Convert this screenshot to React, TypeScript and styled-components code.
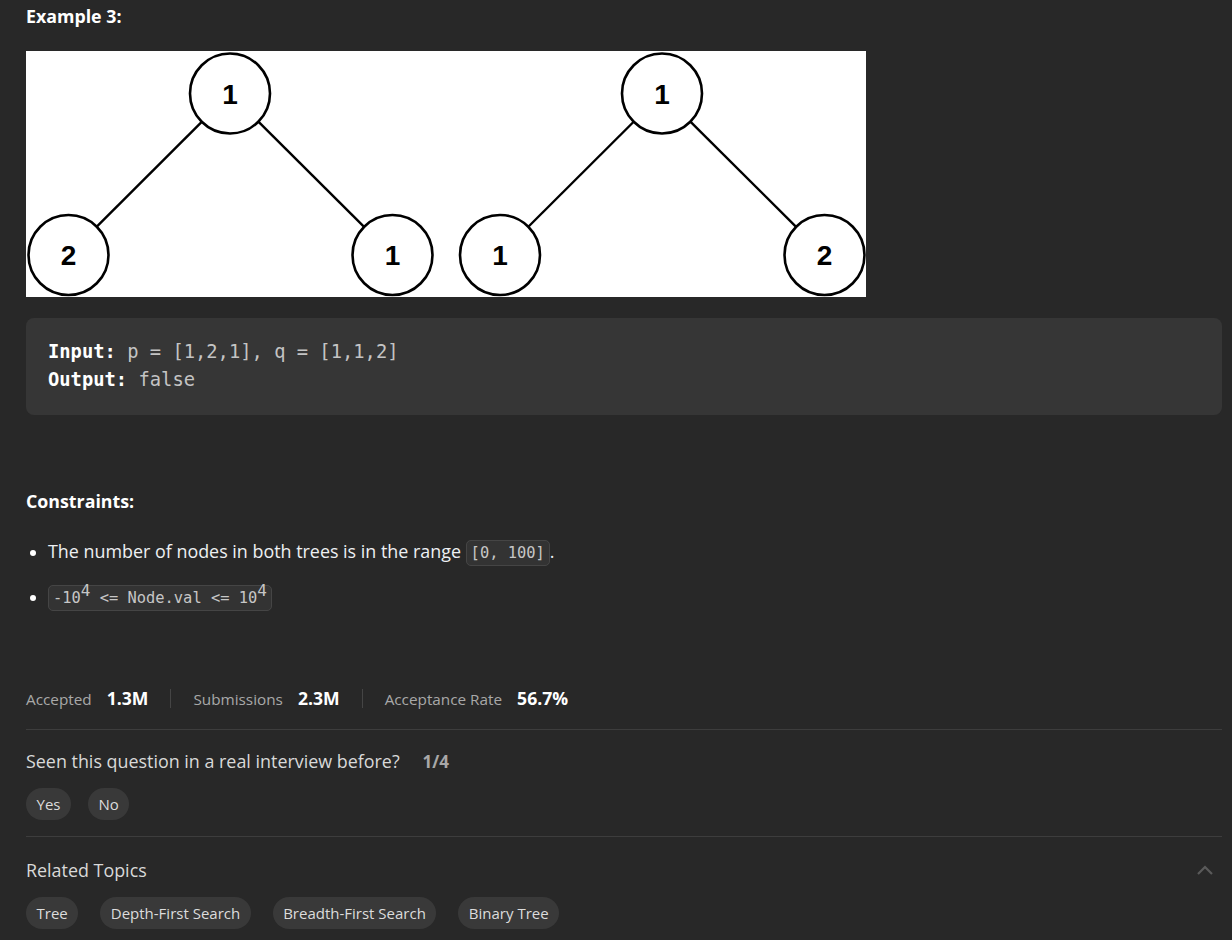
import React from "react";
import styled, { createGlobalStyle } from "styled-components";

const GlobalStyle = createGlobalStyle`
  html, body { margin: 0; padding: 0; background: #282828; }
  body { font-family: "Open Sans", "Noto Sans", sans-serif; color: #eff1f6; }
  * { box-sizing: border-box; }
`;

const Page = styled.div`
  display: flex;
  flex-direction: column;
  padding: 4px 10px 0 26px;
  width: 1232px;
  height: 940px;
  overflow: hidden;
`;

const Heading = styled.div<{ $mt?: number }>`
  font-weight: 700;
  font-size: 17.8px;
  line-height: 24px;
  color: #ffffff;
  margin-top: ${(p) => p.$mt ?? 0}px;
`;

const Figure = styled.div`
  margin-top: 23px;
  width: 840px;
  height: 246px;
  background: #ffffff;
  display: flex;
`;

const Pre = styled.pre`
  margin: 21px 0 0 0;
  background: #363636;
  border-radius: 8px;
  padding: 20px 22px 21px;
  font-family: "DejaVu Sans Mono", "Liberation Mono", monospace;
  font-size: 18.8px;
  line-height: 28px;
  color: #c4c4c4;
  white-space: pre;
`;

const CodeLabel = styled.strong`
  color: #ffffff;
  font-weight: 700;
`;

const List = styled.ul`
  margin: 25px 0 0 0;
  padding: 0 0 0 22px;
  list-style: disc;
  display: flex;
  flex-direction: column;
  gap: 19px;
`;

const Item = styled.li`
  font-size: 17.9px;
  line-height: 26px;
  height: 26px;
  color: #eef0f3;
  &::marker { color: #ffffff; font-size: 16px; }
`;

const InlineCode = styled.code`
  font-family: "DejaVu Sans Mono", "Liberation Mono", monospace;
  font-size: 15.4px;
  padding: 3px 4px;
  border: 1px solid #454545;
  background: #333333;
  border-radius: 5px;
  color: #c6c6c6;
  white-space: pre;
`;

const Sup = styled.span`
  font-size: 16px;
  line-height: 0;
  position: relative;
  top: -7px;
`;

const StatsRow = styled.div`
  margin-top: 77px;
  display: flex;
  align-items: center;
  height: 24px;
`;

const Stat = styled.div`
  display: flex;
  align-items: baseline;
  gap: 15px;
`;

const StatLabel = styled.span`
  font-size: 15.3px;
  color: #a8a8a8;
`;

const StatValue = styled.span`
  font-size: 17.6px;
  font-weight: 700;
  color: #ffffff;
`;

const Sep = styled.div`
  width: 1px;
  height: 19px;
  background: #454545;
  margin: 0 22px;
`;

const Divider = styled.div<{ $mt: number }>`
  margin-top: ${(p) => p.$mt}px;
  height: 1px;
  background: #3d3d3d;
`;

const QuestionRow = styled.div`
  margin-top: 19px;
  display: flex;
  align-items: baseline;
  gap: 23px;
  line-height: 24px;
`;

const QuestionText = styled.span`
  font-size: 17.9px;
  color: #d9d9d9;
`;

const Count = styled.span`
  font-size: 17px;
  font-weight: 700;
  color: #a8a8a8;
`;

const PillRow = styled.div<{ $mt: number; $gap: number }>`
  margin-top: ${(p) => p.$mt}px;
  display: flex;
  gap: ${(p) => p.$gap}px;
`;

const Pill = styled.span`
  height: 32px;
  padding: 0 10.5px;
  border-radius: 16px;
  background: #393939;
  color: #dcdcdc;
  font-size: 15px;
  display: inline-flex;
  align-items: center;
`;

const SectionHeader = styled.div`
  margin-top: 21px;
  display: flex;
  align-items: center;
  justify-content: space-between;
  height: 24px;
`;

const SectionTitle = styled.span`
  font-size: 17.9px;
  color: #d9d9d9;
`;

const Chevron = styled.svg`
  margin-right: 8px;
`;

type NodeDef = { x: number; y: number; v: string };

const r = 40;

const TreeNode: React.FC<NodeDef> = ({ x, y, v }) => (
  <g>
    <circle cx={x} cy={y} r={r} fill="#fff" stroke="#000" strokeWidth={2.6} />
    <text
      x={x}
      y={y + 10}
      textAnchor="middle"
      fontFamily="Liberation Sans, Arial, sans-serif"
      fontWeight={700}
      fontSize={28}
      fill="#000"
    >
      {v}
    </text>
  </g>
);

const Edge: React.FC<{ a: NodeDef; b: NodeDef }> = ({ a, b }) => {
  const dx = b.x - a.x;
  const dy = b.y - a.y;
  const d = Math.hypot(dx, dy);
  const ux = dx / d;
  const uy = dy / d;
  return (
    <line
      x1={a.x + ux * r}
      y1={a.y + uy * r}
      x2={b.x - ux * r}
      y2={b.y - uy * r}
      stroke="#000"
      strokeWidth={2.4}
    />
  );
};

const trees: NodeDef[][] = [
  [
    { x: 204, y: 42.5, v: "1" },
    { x: 42.5, y: 204, v: "2" },
    { x: 366.5, y: 204, v: "1" },
  ],
  [
    { x: 636, y: 42.5, v: "1" },
    { x: 474, y: 204, v: "1" },
    { x: 798.5, y: 204, v: "2" },
  ],
];

const TreeDiagram = () => (
  <svg width={840} height={246} viewBox="0 0 840 246">
    {trees.map((t, i) => (
      <g key={i}>
        <Edge a={t[0]} b={t[1]} />
        <Edge a={t[0]} b={t[2]} />
        {t.map((n, j) => (
          <TreeNode key={j} {...n} />
        ))}
      </g>
    ))}
  </svg>
);

const topics = ["Tree", "Depth-First Search", "Breadth-First Search", "Binary Tree"];

export default function App() {
  return (
    <>
      <GlobalStyle />
      <Page>
        <Heading>Example 3:</Heading>
        <Figure>
          <TreeDiagram />
        </Figure>
        <Pre>
          <CodeLabel>Input:</CodeLabel> p = [1,2,1], q = [1,1,2]
          {"\n"}
          <CodeLabel>Output:</CodeLabel> false
        </Pre>
        <Heading $mt={74}>Constraints:</Heading>
        <List>
          <Item>
            The number of nodes in both trees is in the range <InlineCode>[0, 100]</InlineCode>.
          </Item>
          <Item>
            <InlineCode>
              -10<Sup>4</Sup> &lt;= Node.val &lt;= 10<Sup>4</Sup>
            </InlineCode>
          </Item>
        </List>
        <StatsRow>
          <Stat>
            <StatLabel>Accepted</StatLabel>
            <StatValue>1.3M</StatValue>
          </Stat>
          <Sep />
          <Stat>
            <StatLabel>Submissions</StatLabel>
            <StatValue>2.3M</StatValue>
          </Stat>
          <Sep />
          <Stat>
            <StatLabel>Acceptance Rate</StatLabel>
            <StatValue>56.7%</StatValue>
          </Stat>
        </StatsRow>
        <Divider $mt={19} />
        <QuestionRow>
          <QuestionText>Seen this question in a real interview before?</QuestionText>
          <Count>1/4</Count>
        </QuestionRow>
        <PillRow $mt={14} $gap={17}>
          <Pill>Yes</Pill>
          <Pill>No</Pill>
        </PillRow>
        <Divider $mt={16} />
        <SectionHeader>
          <SectionTitle>Related Topics</SectionTitle>
          <Chevron width="18" height="12" viewBox="0 0 18 12">
            <path d="M2 10 L9 3 L16 10" fill="none" stroke="#5a5a5a" strokeWidth="2.2" />
          </Chevron>
        </SectionHeader>
        <PillRow $mt={15} $gap={22}>
          {topics.map((t) => (
            <Pill key={t}>{t}</Pill>
          ))}
        </PillRow>
      </Page>
    </>
  );
}
